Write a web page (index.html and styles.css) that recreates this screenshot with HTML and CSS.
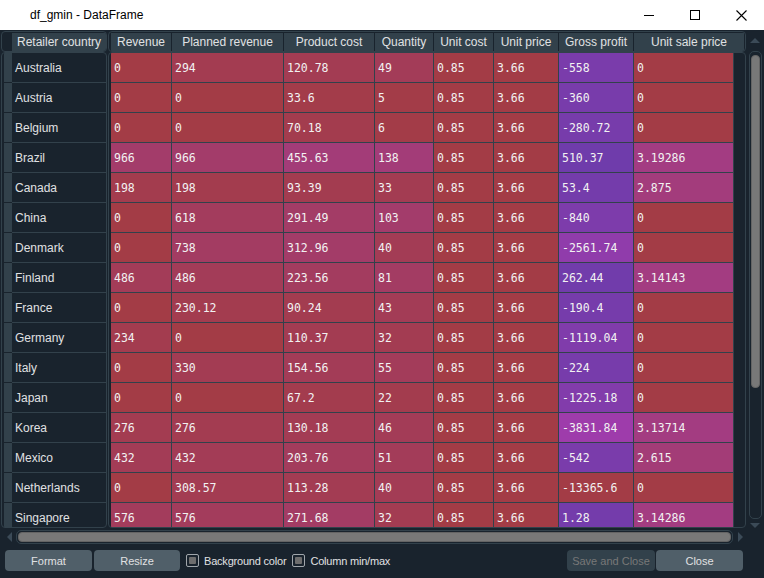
FILE: index.html
```html
<!DOCTYPE html>
<html>
<head>
<meta charset="utf-8">
<title>df_gmin - DataFrame</title>
<link rel="stylesheet" href="styles.css">
</head>
<body>
<div class="titlebar">
  <div class="title">df_gmin - DataFrame</div>
  <div class="winbtn"><svg width="10" height="10" viewBox="0 0 10 10"><line x1="0" y1="5.5" x2="10" y2="5.5" stroke="#000" stroke-width="1"/></svg></div>
  <div class="winbtn"><svg width="10" height="10" viewBox="0 0 10 10"><rect x="0.5" y="0.5" width="9" height="9" fill="none" stroke="#000" stroke-width="1"/></svg></div>
  <div class="winbtn"><svg width="11" height="11" viewBox="0 0 11 11"><path d="M0.5 0.5 L10.5 10.5 M10.5 0.5 L0.5 10.5" stroke="#000" stroke-width="1.1" fill="none"/></svg></div>
</div>

<div class="tables">
  <div class="panel corner">
    <div class="corner-strip"></div>
    <div class="hsec">Retailer country</div>
  </div>
  <div class="panel colhead">
    <div class="hsec w1">Revenue</div>
    <div class="hsec w2">Planned revenue</div>
    <div class="hsec w3">Product cost</div>
    <div class="hsec w4">Quantity</div>
    <div class="hsec w5">Unit cost</div>
    <div class="hsec w6">Unit price</div>
    <div class="hsec w7">Gross profit</div>
    <div class="hsec last">Unit sale price</div>
  </div>
  <div class="vscroll">
    <div class="arrow-up"></div>
    <div class="vgroove"><div class="vhandle"></div></div>
    <div class="arrow-down"></div>
  </div>
  <div class="panel index">
    <div class="irow"><div class="istrip"></div><div class="icell">Australia</div></div>
    <div class="irow"><div class="istrip"></div><div class="icell">Austria</div></div>
    <div class="irow"><div class="istrip"></div><div class="icell">Belgium</div></div>
    <div class="irow"><div class="istrip"></div><div class="icell">Brazil</div></div>
    <div class="irow"><div class="istrip"></div><div class="icell">Canada</div></div>
    <div class="irow"><div class="istrip"></div><div class="icell">China</div></div>
    <div class="irow"><div class="istrip"></div><div class="icell">Denmark</div></div>
    <div class="irow"><div class="istrip"></div><div class="icell">Finland</div></div>
    <div class="irow"><div class="istrip"></div><div class="icell">France</div></div>
    <div class="irow"><div class="istrip"></div><div class="icell">Germany</div></div>
    <div class="irow"><div class="istrip"></div><div class="icell">Italy</div></div>
    <div class="irow"><div class="istrip"></div><div class="icell">Japan</div></div>
    <div class="irow"><div class="istrip"></div><div class="icell">Korea</div></div>
    <div class="irow"><div class="istrip"></div><div class="icell">Mexico</div></div>
    <div class="irow"><div class="istrip"></div><div class="icell">Netherlands</div></div>
    <div class="irow"><div class="istrip"></div><div class="icell">Singapore</div></div>
  </div>
  <div class="panel data">
    <div class="grid">
      <div class="c" style="background:#a33c46">0</div><div class="c" style="background:#a33c51">294</div><div class="c" style="background:#a33c53">120.78</div><div class="c" style="background:#a33c58">49</div><div class="c">0.85</div><div class="c">3.66</div><div class="c" style="background:#7a3cab">-558</div><div class="c" style="background:#a33c46">0</div>
      <div class="c" style="background:#a33c46">0</div><div class="c" style="background:#a33c46">0</div><div class="c" style="background:#a33c4a">33.6</div><div class="c" style="background:#a33c48">5</div><div class="c">0.85</div><div class="c">3.66</div><div class="c" style="background:#783cab">-360</div><div class="c" style="background:#a33c46">0</div>
      <div class="c" style="background:#a33c46">0</div><div class="c" style="background:#a33c46">0</div><div class="c" style="background:#a33c4e">70.18</div><div class="c" style="background:#a33c48">6</div><div class="c">0.85</div><div class="c">3.66</div><div class="c" style="background:#773cab">-280.72</div><div class="c" style="background:#a33c46">0</div>
      <div class="c" style="background:#a33c6a">966</div><div class="c" style="background:#a33c6a">966</div><div class="c" style="background:#a33c78">455.63</div><div class="c" style="background:#a33c78">138</div><div class="c">0.85</div><div class="c">3.66</div><div class="c" style="background:#6f3cab">510.37</div><div class="c" style="background:#a33c82">3.19286</div>
      <div class="c" style="background:#a33c4e">198</div><div class="c" style="background:#a33c4e">198</div><div class="c" style="background:#a33c50">93.39</div><div class="c" style="background:#a33c52">33</div><div class="c">0.85</div><div class="c">3.66</div><div class="c" style="background:#743cab">53.4</div><div class="c" style="background:#a33c7c">2.875</div>
      <div class="c" style="background:#a33c46">0</div><div class="c" style="background:#a33c5d">618</div><div class="c" style="background:#a33c66">291.49</div><div class="c" style="background:#a33c6b">103</div><div class="c">0.85</div><div class="c">3.66</div><div class="c" style="background:#7d3cab">-840</div><div class="c" style="background:#a33c46">0</div>
      <div class="c" style="background:#a33c46">0</div><div class="c" style="background:#a33c62">738</div><div class="c" style="background:#a33c68">312.96</div><div class="c" style="background:#a33c55">40</div><div class="c">0.85</div><div class="c">3.66</div><div class="c" style="background:#903cab">-2561.74</div><div class="c" style="background:#a33c46">0</div>
      <div class="c" style="background:#a33c58">486</div><div class="c" style="background:#a33c58">486</div><div class="c" style="background:#a33c5f">223.56</div><div class="c" style="background:#a33c63">81</div><div class="c">0.85</div><div class="c">3.66</div><div class="c" style="background:#713cab">262.44</div><div class="c" style="background:#a33c81">3.14143</div>
      <div class="c" style="background:#a33c46">0</div><div class="c" style="background:#a33c4f">230.12</div><div class="c" style="background:#a33c50">90.24</div><div class="c" style="background:#a33c56">43</div><div class="c">0.85</div><div class="c">3.66</div><div class="c" style="background:#763cab">-190.4</div><div class="c" style="background:#a33c46">0</div>
      <div class="c" style="background:#a33c4f">234</div><div class="c" style="background:#a33c46">0</div><div class="c" style="background:#a33c52">110.37</div><div class="c" style="background:#a33c52">32</div><div class="c">0.85</div><div class="c">3.66</div><div class="c" style="background:#803cab">-1119.04</div><div class="c" style="background:#a33c46">0</div>
      <div class="c" style="background:#a33c46">0</div><div class="c" style="background:#a33c53">330</div><div class="c" style="background:#a33c57">154.56</div><div class="c" style="background:#a33c5a">55</div><div class="c">0.85</div><div class="c">3.66</div><div class="c" style="background:#773cab">-224</div><div class="c" style="background:#a33c46">0</div>
      <div class="c" style="background:#a33c46">0</div><div class="c" style="background:#a33c46">0</div><div class="c" style="background:#a33c4e">67.2</div><div class="c" style="background:#a33c4e">22</div><div class="c">0.85</div><div class="c">3.66</div><div class="c" style="background:#823cab">-1225.18</div><div class="c" style="background:#a33c46">0</div>
      <div class="c" style="background:#a33c51">276</div><div class="c" style="background:#a33c51">276</div><div class="c" style="background:#a33c54">130.18</div><div class="c" style="background:#a33c57">46</div><div class="c">0.85</div><div class="c">3.66</div><div class="c" style="background:#9e3cab">-3831.84</div><div class="c" style="background:#a33c81">3.13714</div>
      <div class="c" style="background:#a33c56">432</div><div class="c" style="background:#a33c56">432</div><div class="c" style="background:#a33c5c">203.76</div><div class="c" style="background:#a33c59">51</div><div class="c">0.85</div><div class="c">3.66</div><div class="c" style="background:#7a3cab">-542</div><div class="c" style="background:#a33c77">2.615</div>
      <div class="c" style="background:#a33c46">0</div><div class="c" style="background:#a33c52">308.57</div><div class="c" style="background:#a33c53">113.28</div><div class="c" style="background:#a33c55">40</div><div class="c">0.85</div><div class="c">3.66</div><div class="c" style="background:#a33c46">-13365.6</div><div class="c" style="background:#a33c46">0</div>
      <div class="c" style="background:#a33c5c">576</div><div class="c" style="background:#a33c5c">576</div><div class="c" style="background:#a33c64">271.68</div><div class="c" style="background:#a33c52">32</div><div class="c">0.85</div><div class="c">3.66</div><div class="c" style="background:#743cab">1.28</div><div class="c" style="background:#a33c81">3.14286</div>
    </div>
  </div>
</div>

<div class="hscroll">
  <div class="arrow-left"></div>
  <div class="hgroove"><div class="hhandle"></div></div>
  <div class="arrow-right"></div>
</div>

<div class="btnrow">
  <div class="btn fmt">Format</div>
  <div class="btn rsz">Resize</div>
  <div class="chk"><div class="chk-fill"></div></div>
  <div class="chk-label">Background color</div>
  <div class="chk"><div class="chk-fill"></div></div>
  <div class="chk-label">Column min/max</div>
  <div class="btn save disabled">Save and Close</div>
  <div class="btn close">Close</div>
</div>
</body>
</html>
```

FILE: styles.css
```css
* { box-sizing: border-box; }
html, body { margin: 0; padding: 0; }
body {
  width: 764px;
  height: 578px;
  overflow: hidden;
  background: #19232d;
  font-family: "Liberation Sans", Arial, sans-serif;
  font-size: 12px;
  color: #e0e1e3;
}

.titlebar {
  height: 30px;
  background: #ffffff;
  display: flex;
  align-items: center;
  color: #000000;
}
.title { flex: 1; padding-left: 30px; font-size: 12px; }
.winbtn {
  width: 46px;
  height: 30px;
  display: flex;
  align-items: center;
  justify-content: center;
}

.tables {
  display: grid;
  grid-template-columns: 106px 638px 16px;
  grid-template-rows: 21px 476px;
  column-gap: 1px;
  margin: 1px 0 0 1px;
}

.panel {
  border: 1px solid #32414b;
  border-radius: 4px;
  overflow: hidden;
  background: #19232d;
}

.corner { display: flex; padding: 1px 0 0 2px; }
.corner-strip { width: 8px; height: 18px; }
.hsec {
  height: 18px;
  background: #32414b;
  display: flex;
  align-items: center;
  justify-content: center;
  border-right: 1px solid #19232d;
  white-space: nowrap;
  overflow: hidden;
  flex: none;
}
.corner .hsec { width: 94px; border-right: none; }

.colhead { display: flex; padding: 1px 1px 0 2px; }
.w1 { width: 61px; }
.w2 { width: 112px; }
.w3 { width: 91px; }
.w4 { width: 59px; }
.w5 { width: 60px; }
.w6 { width: 65px; }
.w7 { width: 75px; }
.colhead .last { flex: 1; border-right: none; }

.vscroll {
  grid-column: 3;
  grid-row: 1 / span 2;
  display: flex;
  flex-direction: column;
  align-items: center;
}
.arrow-up {
  width: 0;
  height: 0;
  margin-top: 7px;
  margin-bottom: 8px;
  border-left: 5px solid transparent;
  border-right: 5px solid transparent;
  border-bottom: 5px solid #3b4a57;
}
.vgroove {
  width: 13px;
  height: 469px;
  border: 1px solid #32414b;
  border-radius: 5px;
  padding: 3px 1px 0 1px;
}
.vhandle {
  width: 9px;
  height: 333px;
  background: #787878;
  border: 1px solid #646464;
  border-radius: 4px;
}
.arrow-down {
  width: 0;
  height: 0;
  margin-top: 4px;
  border-left: 5px solid transparent;
  border-right: 5px solid transparent;
  border-top: 5px solid #3b4a57;
}

.index { padding-left: 2px; }
.irow { display: flex; height: 30px; }
.istrip { width: 8px; height: 29px; background: #32414b; }
.icell {
  width: 94px;
  height: 30px;
  border-bottom: 1px solid #32414b;
  padding-left: 3px;
  display: flex;
  align-items: center;
  white-space: nowrap;
}

.data { padding-left: 2px; }
.grid {
  display: grid;
  grid-template-columns: 61px 112px 91px 59px 60px 65px 75px 100px;
  grid-auto-rows: 30px;
  width: 623px;
}
.c {
  background: #a33c46;
  border-right: 1px solid #32414b;
  border-bottom: 1px solid #32414b;
  padding-left: 3px;
  display: flex;
  align-items: center;
  font-family: "DejaVu Sans Mono", "Liberation Mono", monospace;
  font-size: 11.5px;
  color: #f2f2f2;
  white-space: nowrap;
  overflow: hidden;
}

.hscroll {
  display: flex;
  align-items: center;
  height: 14px;
  width: 746px;
  margin-top: 2px;
  padding-left: 7px;
}
.arrow-left {
  width: 0;
  height: 0;
  border-top: 5px solid transparent;
  border-bottom: 5px solid transparent;
  border-right: 5px solid #3b4a57;
}
.hgroove {
  width: 717px;
  height: 14px;
  margin-left: 4px;
  border: 1px solid #32414b;
  border-radius: 5px;
  padding: 1px;
}
.hhandle {
  height: 10px;
  background: #787878;
  border: 1px solid #646464;
  border-radius: 4px;
}
.arrow-right {
  width: 0;
  height: 0;
  margin-left: 5px;
  border-top: 5px solid transparent;
  border-bottom: 5px solid transparent;
  border-left: 5px solid #3b4a57;
}

.btnrow {
  display: flex;
  align-items: center;
  height: 21px;
  margin-top: 6px;
  padding-left: 5px;
  padding-right: 21px;
  font-size: 11px;
}
.btn {
  height: 21px;
  border-radius: 4px;
  background: #505f69;
  display: flex;
  align-items: center;
  justify-content: center;
  color: #e0e1e3;
  white-space: nowrap;
}
.fmt { width: 87px; }
.rsz { width: 86px; margin-left: 2px; }
.chk {
  width: 13px;
  height: 13px;
  margin-left: 6px;
  border: 1px solid #a0a6ab;
  border-radius: 2px;
  padding: 2px;
}
.chk-fill { width: 100%; height: 100%; background: #6e6e6e; border-radius: 1px; }
.chk-label { margin-left: 5px; white-space: nowrap; letter-spacing: -0.2px; }
.save { width: 88px; margin-left: auto; }
.disabled { background: #32414b; color: #787878; }
.close { width: 87px; margin-left: 1px; }
```
